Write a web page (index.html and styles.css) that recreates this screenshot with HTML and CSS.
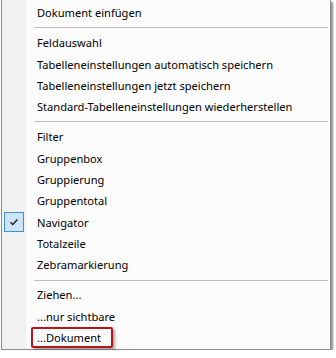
FILE: index.html
```html
<!DOCTYPE html>
<html lang="de">
<head>
  <meta charset="UTF-8">
  <title>Kontextmenü Tabelle</title>
  <link rel="stylesheet" href="styles.css">
</head>
<body>

  <div class="menu">
    <div class="item"><span class="icon"></span><span class="label">Dokument einfügen</span></div>
    <div class="sep"></div>
    <div class="item"><span class="icon"></span><span class="label">Feldauswahl</span></div>
    <div class="item"><span class="icon"></span><span class="label">Tabelleneinstellungen automatisch speichern</span></div>
    <div class="item"><span class="icon"></span><span class="label">Tabelleneinstellungen jetzt speichern</span></div>
    <div class="item"><span class="icon"></span><span class="label">Standard-Tabelleneinstellungen wiederherstellen</span></div>
    <div class="sep"></div>
    <div class="item"><span class="icon"></span><span class="label">Filter</span></div>
    <div class="item"><span class="icon"></span><span class="label">Gruppenbox</span></div>
    <div class="item"><span class="icon"></span><span class="label">Gruppierung</span></div>
    <div class="item"><span class="icon"></span><span class="label">Gruppentotal</span></div>
    <div class="item">
      <span class="icon checked">
        <svg width="18" height="18" viewBox="0 0 18 18">
          <path d="M5.5 9.2 L7.8 11.4 L12.4 6.6" fill="none" stroke="#1e1e1e" stroke-width="1.4"/>
        </svg>
      </span>
      <span class="label">Navigator</span>
    </div>
    <div class="item"><span class="icon"></span><span class="label">Totalzeile</span></div>
    <div class="item"><span class="icon"></span><span class="label">Zebramarkierung</span></div>
    <div class="sep"></div>
    <div class="item"><span class="icon"></span><span class="label">Ziehen...</span></div>
    <div class="item"><span class="icon"></span><span class="label">...nur sichtbare</span></div>
    <div class="item"><span class="icon"></span><span class="label marked">...Dokument</span></div>
  </div>

</body>
</html>
```

FILE: styles.css
```css
body {
  margin: 0;
  background: #fff;
  font-family: "Noto Sans", "Open Sans", sans-serif;
  font-size: 11.1px;
  color: #000;
}

.menu {
  width: 328px;
  margin-left: 1px;
  padding: 2px 0 1px 0;
  border-left: 1px solid #8a8a8a;
  border-right: 1px solid #8a8a8a;
  border-bottom: 1px solid #8a8a8a;
  background: linear-gradient(to right, #f1f1f1 0, #f1f1f1 24px, #fcfcfc 24px);
  box-shadow: 2px 2px 2px rgba(0,0,0,0.45);
}

.item {
  display: flex;
  align-items: center;
  height: 21.35px;
  padding-left: 2px;
}

.icon {
  width: 20px;
  height: 20px;
  margin-right: 13px;
  flex: none;
  box-sizing: border-box;
  display: flex;
  align-items: center;
  justify-content: center;
}

.icon.checked {
  background: #cce4f7;
  border: 1px solid #3c8fd9;
}

.label {
  white-space: nowrap;
}

.sep {
  height: 8.7px;
  margin: 0 2px 0 32px;
  background: linear-gradient(#bdbdbd, #bdbdbd) no-repeat 0 4px / 100% 1px;
}

.marked {
  box-sizing: border-box;
  width: 82px;
  height: 21px;
  margin-left: -6px;
  padding-left: 4px;
  border: 2px solid #b5161d;
  border-radius: 2px;
  box-shadow: 2px 2px 3px rgba(0,0,0,0.35);
  display: flex;
  align-items: center;
}
```
